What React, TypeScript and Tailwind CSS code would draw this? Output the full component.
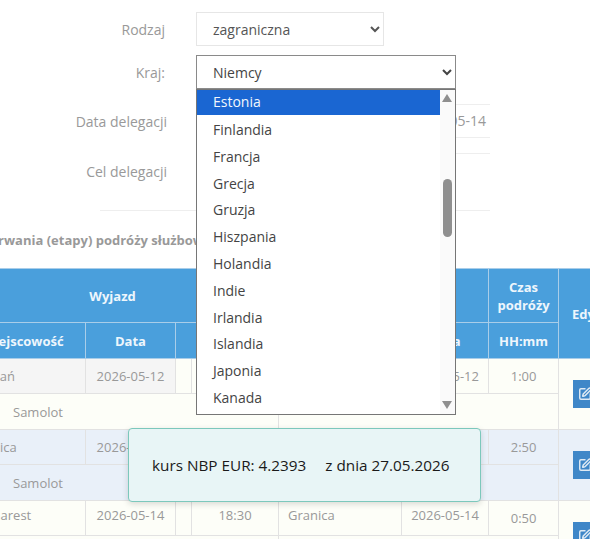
import { SquarePen } from "lucide-react";

const options = ["Finlandia", "Francja", "Grecja", "Gruzja", "Hiszpania", "Holandia", "Indie", "Irlandia", "Islandia", "Japonia", "Kanada"];

const td = "border border-[#e2e2e2] text-center p-0";
const th = "border border-[#a9cde9] text-center font-bold text-[13px] leading-[18px] p-0";

function EditCell({ rowClass }: { rowClass: string }) {
  return (
    <td rowSpan={2} className={`border border-[#e2e2e2] p-0 pl-[14px] ${rowClass}`}>
      <span className="flex h-[28px] w-[44px] items-center pl-[5px] bg-[#3f87c8] text-[#dfeaf4]">
        <SquarePen size={14} strokeWidth={2.5} />
      </span>
    </td>
  );
}

function Pair({ place, date, time, to, toDate, dur, bg, bgA, lift }: { place: string; date: string; time: string; to: string; toDate: string; dur: string; bg: string; bgA: string; lift: string }) {
  return (
    <>
      <tr className={`h-[35px] ${bg}`}>
        <td className={`${td} ${bgA} ${lift} text-left pl-[23px]`}>{place}</td>
        <td className={`${td} ${bgA} ${lift}`}>{date}</td>
        <td className={td}></td>
        <td className={`${td} ${lift}`}>{time}</td>
        <td className={`${td} ${lift} text-left pl-[9px]`}>{to}</td>
        <td className={`${td} ${lift}`}>{toDate}</td>
        <td className={td}>{dur}</td>
        <EditCell rowClass={bg} />
      </tr>
      <tr className={`h-[36px] ${bg}`}>
        <td colSpan={4} className={`${td} text-left pl-[66px]`}>Samolot</td>
        <td colSpan={3} className={td}></td>
      </tr>
    </>
  );
}

export default function App() {
  return (
    <div className="relative w-[590px] h-[539px] overflow-hidden bg-white font-['Open_Sans',sans-serif] text-[#999999]">
      <div className="flex flex-col pt-[12px]">
        <div className="flex items-center h-[34px]">
          <label className="w-[165px] text-right text-[14px] pr-0">Rodzaj</label>
          <select defaultValue="z" className="ml-[31px] w-[188px] h-[34px] pl-[12px] pr-0 border border-[#e6e6e6] bg-white text-[14px] text-[#555555] appearance-auto">
            <option value="z">zagraniczna</option>
          </select>
        </div>
        <div className="flex items-center h-[34px] mt-[9px]">
          <label className="w-[165px] text-right text-[14px]">Kraj:</label>
          <select defaultValue="n" className="ml-[31px] w-[260px] h-[34px] pl-[12px] border border-[#8a8a8a] bg-white text-[14px] text-[#444444] appearance-auto">
            <option value="n">Niemcy</option>
          </select>
        </div>
        <div className="flex items-center h-[34px] mt-[15px]">
          <label className="w-[167px] text-right text-[14px]">Data delegacji</label>
          <div className="ml-[29px] w-[294px] h-[34px] border-y border-[#eeeeee] text-[14px] leading-[32px] text-right pr-[4px]">2026-05-14</div>
        </div>
        <div className="flex h-[57px] mt-[15px]">
          <label className="w-[167px] text-right text-[14px] pt-[8px]">Cel delegacji</label>
          <div className="ml-[29px] w-[294px] border-t border-[#eeeeee]"></div>
        </div>
        <div className="ml-[100px] w-[390px] border-t border-[#eeeeee]"></div>
        <h4 className="mt-[20px] ml-[-30px] h-[18px] whitespace-nowrap text-[13px] leading-[18px] font-bold">Przerwania (etapy) podróży służbowej</h4>
      </div>

      <table className="mt-[19px] ml-[-54px] w-[702px] table-fixed border-collapse text-[13px] leading-[18px]">
        <colgroup>
          <col className="w-[139px]" />
          <col className="w-[90px]" />
          <col className="w-[16px]" />
          <col className="w-[87px]" />
          <col className="w-[123px]" />
          <col className="w-[87px]" />
          <col className="w-[70px]" />
          <col className="w-[90px]" />
        </colgroup>
        <thead className="bg-[#4a9fdc] text-[#eef6fc]">
          <tr className="h-[54px]">
            <th colSpan={4} className={th}>Wyjazd</th>
            <th colSpan={2} className={th}>Przyjazd</th>
            <th className={th}>Czas<br />podróży</th>
            <th rowSpan={2} className={`${th} text-left pl-[13px]`}>Edytuj</th>
          </tr>
          <tr className="h-[36px]">
            <th className={`${th} pl-[14px]`}>Miejscowość</th>
            <th className={th}>Data</th>
            <th colSpan={2} className={th}>Godzina</th>
            <th className={th}>Miejscowość</th>
            <th className={th}>Data</th>
            <th className={th}>HH:mm</th>
          </tr>
        </thead>
        <tbody>
          <Pair place="Poznań" date="2026-05-12" time="8:00" to="Warszawa" toDate="2026-05-12" dur="1:00" bg="bg-[#fdfef8]" bgA="bg-[#f5f5f5]" lift="" />
          <Pair place="Granica" date="2026-05-12" time="12:00" to="Bukarest" toDate="2026-05-14" dur="2:50" bg="bg-[#e9f0f9]" bgA="" lift="" />
          <Pair place="Bucharest" date="2026-05-14" time="18:30" to="Granica" toDate="2026-05-14" dur="0:50" bg="bg-[#fdfef8]" bgA="" lift="pb-[6px]" />
        </tbody>
      </table>

      <div className="absolute left-[196px] top-[89px] w-[260px] h-[326px] flex border border-[#767676] bg-white text-[14px] text-[#444444]">
        <div className="flex-1 flex flex-col">
          <div className="h-[25px] leading-[23px] pl-[16px] bg-[#1a66d2] text-[#f2f6fc]">Estonia</div>
          <div className="flex flex-col pt-[2px]">
            {options.map((o) => (
              <div key={o} className="h-[26.8px] leading-[26.8px] pl-[16px]">{o}</div>
            ))}
          </div>
        </div>
        <div className="relative w-[15px] bg-[#fafafa]">
          <svg className="absolute left-[2px] top-[4px]" width="10" height="8" viewBox="0 0 10 8"><path d="M5 0 10 8H0Z" fill="#8f8f8f" /></svg>
          <div className="absolute left-[3px] top-[89px] w-[9px] h-[58px] rounded-full bg-[#8f8f8f]"></div>
          <svg className="absolute left-[2px] bottom-[5px]" width="10" height="8" viewBox="0 0 10 8"><path d="M0 0H10L5 8Z" fill="#8f8f8f" /></svg>
        </div>
      </div>

      <div className="absolute left-[128px] top-[428px] w-[353px] h-[74px] flex items-center pl-[23px] rounded-[4px] border border-[#7cc8bc] bg-[#e8f5f6] shadow-[0_2px_6px_rgba(0,0,0,0.15)] text-[15.3px] text-[#1a1a1a] whitespace-nowrap">
        <span>kurs NBP EUR: 4.2393</span>
        <span className="ml-[19px]">z dnia 27.05.2026</span>
      </div>
    </div>
  );
}
